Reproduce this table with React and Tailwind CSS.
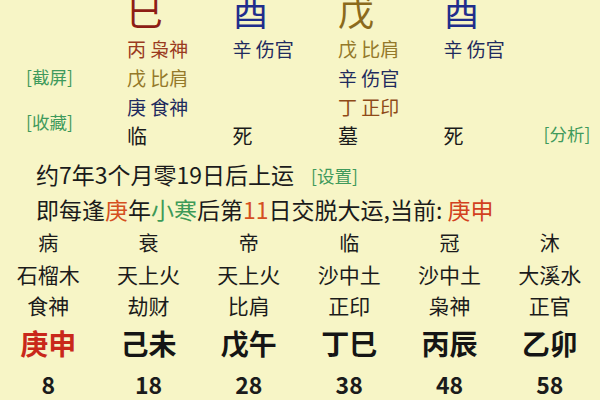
const FONT = { fontFamily: '"Noto Sans CJK SC", "Noto Sans", sans-serif' };

const RED_BROWN = "text-[#9a3a1e]";
const OLIVE = "text-[#94792a]";
const NAVY = "text-[#1f2b5e]";
const BROWN = "text-[#8e4a18]";

const PILLARS = [
  {
    branch: "巳",
    color: "text-[#8d1d15]",
    stems: [
      ["丙 枭神", RED_BROWN],
      ["戊 比肩", OLIVE],
      ["庚 食神", NAVY],
    ],
    phase: "临",
  },
  {
    branch: "酉",
    color: "text-[#1f2d8c]",
    stems: [["辛 伤官", NAVY], null, null],
    phase: "死",
  },
  {
    branch: "戊",
    color: "text-[#8b6a1c]",
    stems: [
      ["戊 比肩", OLIVE],
      ["辛 伤官", NAVY],
      ["丁 正印", BROWN],
    ],
    phase: "墓",
  },
  {
    branch: "酉",
    color: "text-[#1f2d8c]",
    stems: [["辛 伤官", NAVY], null, null],
    phase: "死",
  },
];

const LUCK = [
  { phase: "病", nayin: "石榴木", god: "食神", pillar: "庚申", age: 8, current: true },
  { phase: "衰", nayin: "天上火", god: "劫财", pillar: "己未", age: 18 },
  { phase: "帝", nayin: "天上火", god: "比肩", pillar: "戊午", age: 28 },
  { phase: "临", nayin: "沙中土", god: "正印", pillar: "丁巳", age: 38 },
  { phase: "冠", nayin: "沙中土", god: "枭神", pillar: "丙辰", age: 48 },
  { phase: "沐", nayin: "大溪水", god: "正官", pillar: "乙卯", age: 58 },
];

const Tag = ({ children, className = "" }) => (
  <span
    className={`text-[17.5px] leading-none whitespace-nowrap text-[#3f9a5c] ${className}`}
  >
    [{children}]
  </span>
);

const App = () => {
  return (
    <div
      className="w-[600px] h-[400px] overflow-hidden bg-[#f7f5c6] text-[#1b1b1b]"
      style={FONT}
    >
      {/* ================= 四柱 ================= */}
      <div className="flex">
        {/* left links */}
        <div className="w-[127px] shrink-0 flex flex-col items-start pl-[26px] pt-[68px]">
          <Tag>截屏</Tag>
          <Tag className="mt-[27px]">收藏</Tag>
        </div>

        {PILLARS.map((p, i) => (
          <div
            key={i}
            className={`${i === 3 ? "w-[95px]" : "w-[105.5px]"} shrink-0 flex flex-col`}
          >
            <div
              className={`h-[34px] text-[36px] leading-none -mt-[8px] mb-[8px] ${p.color}`}
            >
              {p.branch}
            </div>
            {p.stems.map((s, j) => (
              <div
                key={j}
                className={`h-[29px] flex items-center text-[19px] leading-none ${
                  s ? s[1] : ""
                }`}
              >
                {s ? s[0] : ""}
              </div>
            ))}
            <div className="h-[29px] flex items-center text-[20px] leading-none">
              {p.phase}
            </div>
          </div>
        ))}

        <div className="flex-1 flex flex-col justify-end items-start pb-[8px] pl-[5px]">
          <Tag>分析</Tag>
        </div>
      </div>

      {/* ================= 起运 ================= */}
      <div className="mt-[7px] pl-[36px]">
        <div className="h-[35px] flex items-center">
          <span className="text-[23px] leading-none">约7年3个月零19日后上运</span>
          <Tag className="ml-[17px] mt-[2px]">设置</Tag>
        </div>
        <div className="h-[35px] flex items-center text-[23px] leading-none whitespace-nowrap">
          即每逢<span className="text-[#d5501f]">庚</span>年
          <span className="text-[#3d9a57]">小寒</span>后第
          <span className="text-[#d5501f]">11</span>日交脱大运,当前:&nbsp;
          <span className="text-[#d2411e]">庚申</span>
        </div>
      </div>

      {/* ================= 大运 ================= */}
      <div className="grid grid-cols-6 -ml-[2px] mt-[1px]">
        {LUCK.map((l) => (
          <div key={l.age} className="flex flex-col items-center">
            <div className="h-[30px] flex items-center text-[20px] leading-none">
              {l.phase}
            </div>
            <div className="h-[32px] flex items-center text-[21px] leading-none whitespace-nowrap">
              {l.nayin}
            </div>
            <div className="h-[30px] flex items-center text-[21px] leading-none">
              {l.god}
            </div>
            <div
              className={`h-[46px] flex items-center text-[28px] font-bold leading-none ${
                l.current ? "text-[#c9281a]" : "text-[#151515]"
              }`}
            >
              {l.pillar}
            </div>
            <div className="h-[36px] flex items-center text-[23px] font-bold leading-none">
              {l.age}
            </div>
          </div>
        ))}
      </div>
    </div>
  );
};

export default App;
